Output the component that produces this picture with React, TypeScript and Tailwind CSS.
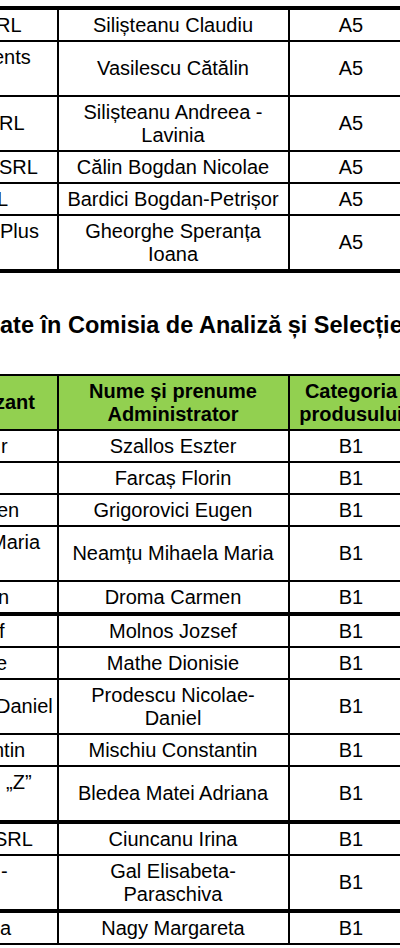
type Row = {
  left: string[];
  ml?: string;
  mid: string[];
  cat: string;
  thick?: boolean;
};

const firstTable: Row[] = [
  { left: ["RL"], ml: "-ml-[4px]", mid: ["Silișteanu Claudiu"], cat: "A5" },
  { left: ["ents", ""], ml: "-ml-[7px]", mid: ["Vasilescu Cătălin"], cat: "A5" },
  { left: ["RL"], ml: "-ml-[1px]", mid: ["Silișteanu Andreea -", "Lavinia"], cat: "A5" },
  { left: ["SRL"], ml: "-ml-[1px]", mid: ["Călin Bogdan Nicolae"], cat: "A5" },
  { left: ["L"], ml: "-ml-[3px]", mid: ["Bardici Bogdan-Petrișor"], cat: "A5" },
  { left: ["Plus", ""], ml: "ml-0", mid: ["Gheorghe Speranța", "Ioana"], cat: "A5", thick: true },
];

const secondTable: Row[] = [
  { left: ["r"], ml: "ml-[1px]", mid: ["Szallos Eszter"], cat: "B1" },
  { left: [""], mid: ["Farcaș Florin"], cat: "B1" },
  { left: ["en"], ml: "-ml-[3px]", mid: ["Grigorovici Eugen"], cat: "B1" },
  { left: ["Maria", ""], ml: "-ml-[10px]", mid: ["Neamțu Mihaela Maria"], cat: "B1" },
  { left: ["n"], ml: "-ml-[2px]", mid: ["Droma Carmen"], cat: "B1", thick: true },
  { left: ["f"], ml: "-ml-[1px]", mid: ["Molnos Jozsef"], cat: "B1" },
  { left: ["e"], ml: "-ml-[4px]", mid: ["Mathe Dionisie"], cat: "B1" },
  { left: ["Daniel"], ml: "-ml-[4px]", mid: ["Prodescu Nicolae-", "Daniel"], cat: "B1" },
  { left: ["ntin"], ml: "-ml-[7px]", mid: ["Mischiu Constantin"], cat: "B1" },
  { left: ["„Z”", ""], ml: "ml-[6px]", mid: ["Bledea Matei Adriana"], cat: "B1", thick: true },
  { left: ["SRL"], ml: "-ml-[6px]", mid: ["Ciuncanu Irina"], cat: "B1" },
  { left: ["-", ""], ml: "ml-[1px]", mid: ["Gal Elisabeta-", "Paraschiva"], cat: "B1", thick: true },
  { left: ["a"], ml: "ml-0", mid: ["Nagy Margareta"], cat: "B1" },
];

function TableRow({ row, header }: { row: Row; header?: boolean }) {
  return (
    <div
      className={`grid grid-cols-[59px_231px_122px] border-black ${
        row.thick ? "border-b-4" : "border-b-2"
      } ${header ? "bg-[#92d050] font-bold" : ""}`}
    >
      {/* cut-off first column */}
      <div className="flex flex-col justify-center overflow-hidden whitespace-nowrap border-r-2 border-black py-[3.5px]">
        {row.left.map((t, i) => (
          <span key={i} className={`block h-[23px] leading-[23px] ${row.ml ?? ""}`}>
            {t}
          </span>
        ))}
      </div>
      <div className="flex flex-col items-center justify-center border-r-2 border-black py-[3.5px] pr-[1px] text-center">
        {row.mid.map((t, i) => (
          <span key={i} className="block leading-[23px] whitespace-nowrap">
            {t}
          </span>
        ))}
      </div>
      <div className="flex flex-col items-center justify-center py-[3.5px] text-center">
        {row.cat.split("\n").map((t, i) => (
          <span key={i} className="block leading-[23px] whitespace-nowrap">
            {t}
          </span>
        ))}
      </div>
    </div>
  );
}

export default function App() {
  return (
    <div className="min-h-[948px] w-[400px] overflow-hidden bg-white text-[20px] text-black font-['Liberation_Sans',Arial,sans-serif]">
      {/* first table (bottom part) */}
      <div className="mt-[6px] w-[415px] border-t-4 border-black">
        {firstTable.map((row, i) => (
          <TableRow key={i} row={row} />
        ))}
      </div>

      {/* section title */}
      <div className="mt-[39px] h-[26px] whitespace-nowrap text-[23.5px] font-bold leading-[26px]">
        ate în Comisia de Analiză și Selecție
      </div>

      {/* second table */}
      <div className="mt-[36px] w-[415px] border-t-2 border-black">
        <TableRow
          header
          row={{
            left: ["zant"],
            ml: "-ml-[5px]",
            mid: ["Nume și prenume", "Administrator"],
            cat: "Categoria\nprodusului",
          }}
        />
        {secondTable.map((row, i) => (
          <TableRow key={i} row={row} />
        ))}
      </div>
    </div>
  );
}
